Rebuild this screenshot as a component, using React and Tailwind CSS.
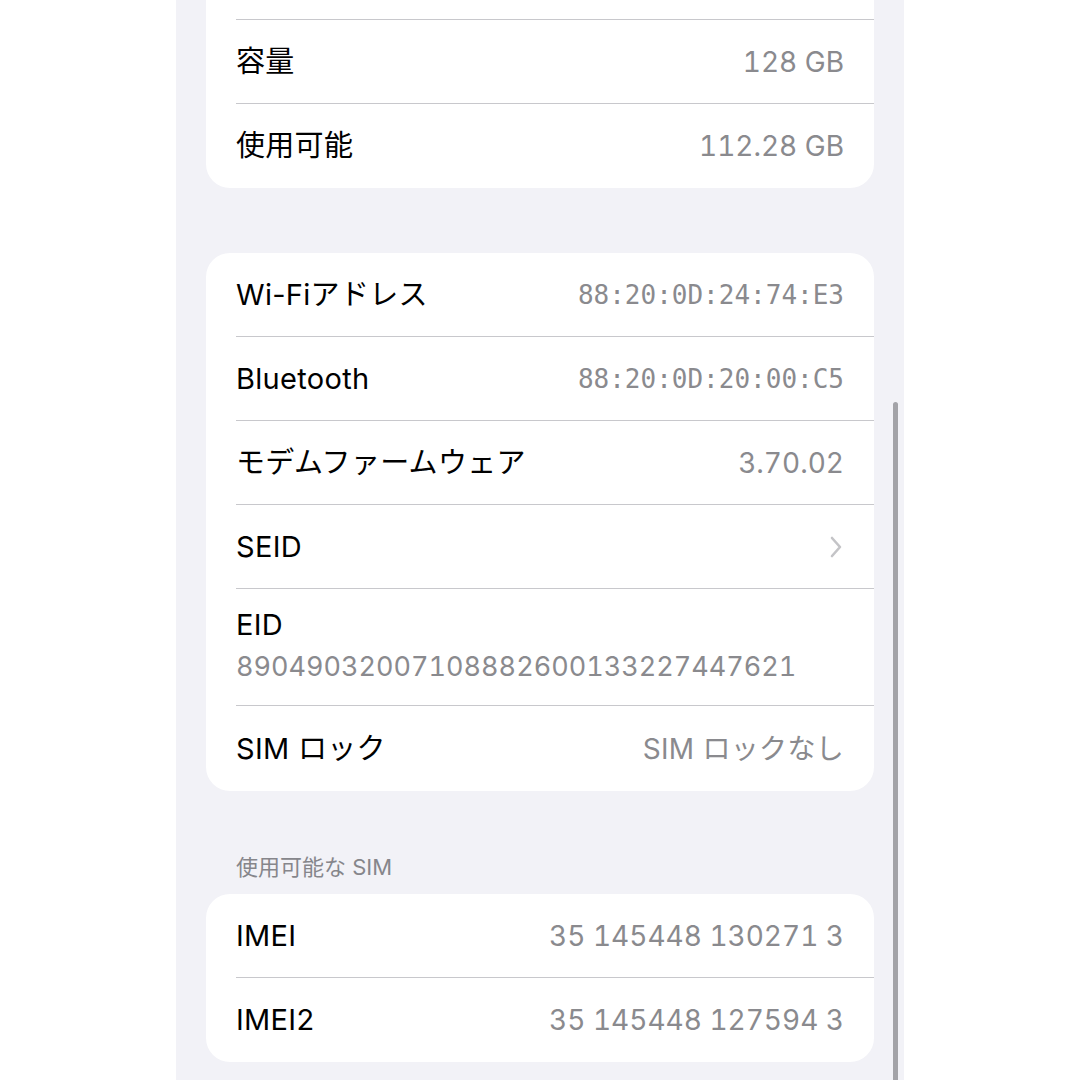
import React from "react";

const SANS = { fontFamily: 'Inter, "Noto Sans CJK JP", sans-serif' };

function Row({ label, value, mono, chevron, last }) {
  return (
    <div className="pl-[30px]">
      <div
        className={
          "h-[84px] flex items-center justify-between pr-[30px] " +
          (last ? "" : "border-b border-[#c8c8cc]")
        }
      >
        <span className="text-[29px] tracking-[0.3px] text-black leading-[34px]">{label}</span>
        {chevron ? (
          <svg width="14" height="24" viewBox="0 0 14 24" className="mr-[1px]">
            <path d="M3 3 L11 12 L3 21" fill="none" stroke="#c4c4c7" strokeWidth="2.6" strokeLinecap="round" strokeLinejoin="round" />
          </svg>
        ) : (
          <span
            className={
              "text-[#8a8a8e] leading-[34px] " +
              (mono ? "text-[26px] font-['DejaVu_Sans_Mono',monospace]" : "text-[28px] tabular-nums")
            }
          >
            {value}
          </span>
        )}
      </div>
    </div>
  );
}

function Card({ children, className = "" }) {
  return <div className={"mx-[30px] bg-white rounded-[24px] overflow-hidden " + className}>{children}</div>;
}

export default function App() {
  return (
    <div className="w-full h-[1080px] bg-white flex justify-center overflow-hidden" style={SANS}>
      <div className="relative w-[728px] h-full bg-[#f2f2f7]">
        <Card className="mt-[-64px]">
          <div className="pl-[30px]">
            <div className="h-[84px] border-b border-[#c8c8cc]" />
          </div>
          <Row label="容量" value="128 GB" />
          <Row label="使用可能" value="112.28 GB" last />
        </Card>

        <Card className="mt-[65px]">
          <Row label="Wi-Fiアドレス" value="88:20:0D:24:74:E3" mono />
          <Row label="Bluetooth" value="88:20:0D:20:00:C5" mono />
          <Row label="モデムファームウェア" value="3.70.02" />
          <Row label="SEID" chevron />
          <div className="pl-[30px]">
            <div className="pt-[19px] pb-[21px] pr-[30px] border-b border-[#c8c8cc]">
              <div className="text-[29px] tracking-[0.3px] text-black leading-[34px]">EID</div>
              <div className="mt-[8px] text-[27px] text-[#8a8a8e] leading-[34px] tabular-nums">
                89049032007108882600133227447621
              </div>
            </div>
          </div>
          <div className="pl-[30px]">
            <div className="h-[85px] flex items-center justify-between pr-[30px]">
              <span className="text-[29px] tracking-[0.3px] text-black leading-[34px]">SIM ロック</span>
              <span className="text-[28px] tracking-[0.3px] text-[#8a8a8e] leading-[34px]">SIM ロックなし</span>
            </div>
          </div>
        </Card>

        <div className="mt-[62px] px-[60px] text-[22px] leading-[28px] text-[#86868b]">使用可能な SIM</div>

        <Card className="mt-[13px]">
          <Row label="IMEI" value="35 145448 130271 3" />
          <Row label="IMEI2" value="35 145448 127594 3" last />
        </Card>

        <div className="absolute left-[717px] top-[402px] w-[5px] h-[700px] rounded-full bg-[#a3a3a8]" />
      </div>
    </div>
  );
}
